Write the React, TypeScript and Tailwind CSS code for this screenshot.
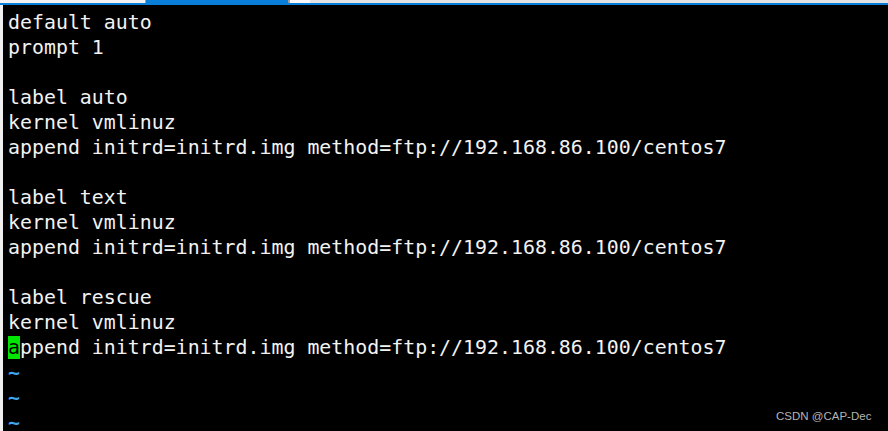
import React from "react";

const lines: string[] = [
  "default auto",
  "prompt 1",
  "",
  "label auto",
  "kernel vmlinuz",
  "append initrd=initrd.img method=ftp://192.168.86.100/centos7",
  "",
  "label text",
  "kernel vmlinuz",
  "append initrd=initrd.img method=ftp://192.168.86.100/centos7",
  "",
  "label rescue",
  "kernel vmlinuz",
];

export default function App() {
  return (
    <div className="relative flex h-[431px] w-[888px] flex-col overflow-hidden bg-black">
      <div className="flex h-[3px] shrink-0">
        <div className="w-[145px] bg-[#f3f3f3]" />
        <div className="w-[1px] bg-[#a0a0a0]" />
        <div className="w-[142px] bg-[#0a7fd9]" />
        <div className="w-[2px] bg-[#a0a0a0]" />
        <div className="w-[20px] bg-[#fafafa]" />
        <div className="flex-1 bg-[#e3e3e3]" />
      </div>
      <div className="h-[2px] shrink-0 bg-[#0a7fd9]" />
      <div className="flex flex-1">
        <div className="w-[3px] shrink-0 bg-[#f0f0f0]" />
        <div
          className="whitespace-pre pl-[5px] pt-[5px] text-[19.9px] leading-[25px] text-[#f2f2f2]"
          style={{ fontFamily: '"DejaVu Sans Mono", monospace' }}
        >
          {lines.map((l, i) => (
            <div key={i} className="h-[25px]">
              {l}
            </div>
          ))}
          <div className="h-[25px]">
            <span className="bg-[#00e600] text-black">a</span>
            ppend initrd=initrd.img method=ftp://192.168.86.100/centos7
          </div>
          <div className="h-[25px] font-bold text-[#3ea6ef]">~</div>
          <div className="h-[25px] font-bold text-[#3ea6ef]">~</div>
          <div className="h-[25px] font-bold text-[#3ea6ef]">~</div>
        </div>
      </div>
      <div
        className="absolute left-[776px] top-[408px] text-[11.5px] leading-[16px] text-[#b4b4b4]"
        style={{ fontFamily: '"Liberation Sans", Arial, sans-serif' }}
      >
        CSDN @CAP-Dec
      </div>
    </div>
  );
}
